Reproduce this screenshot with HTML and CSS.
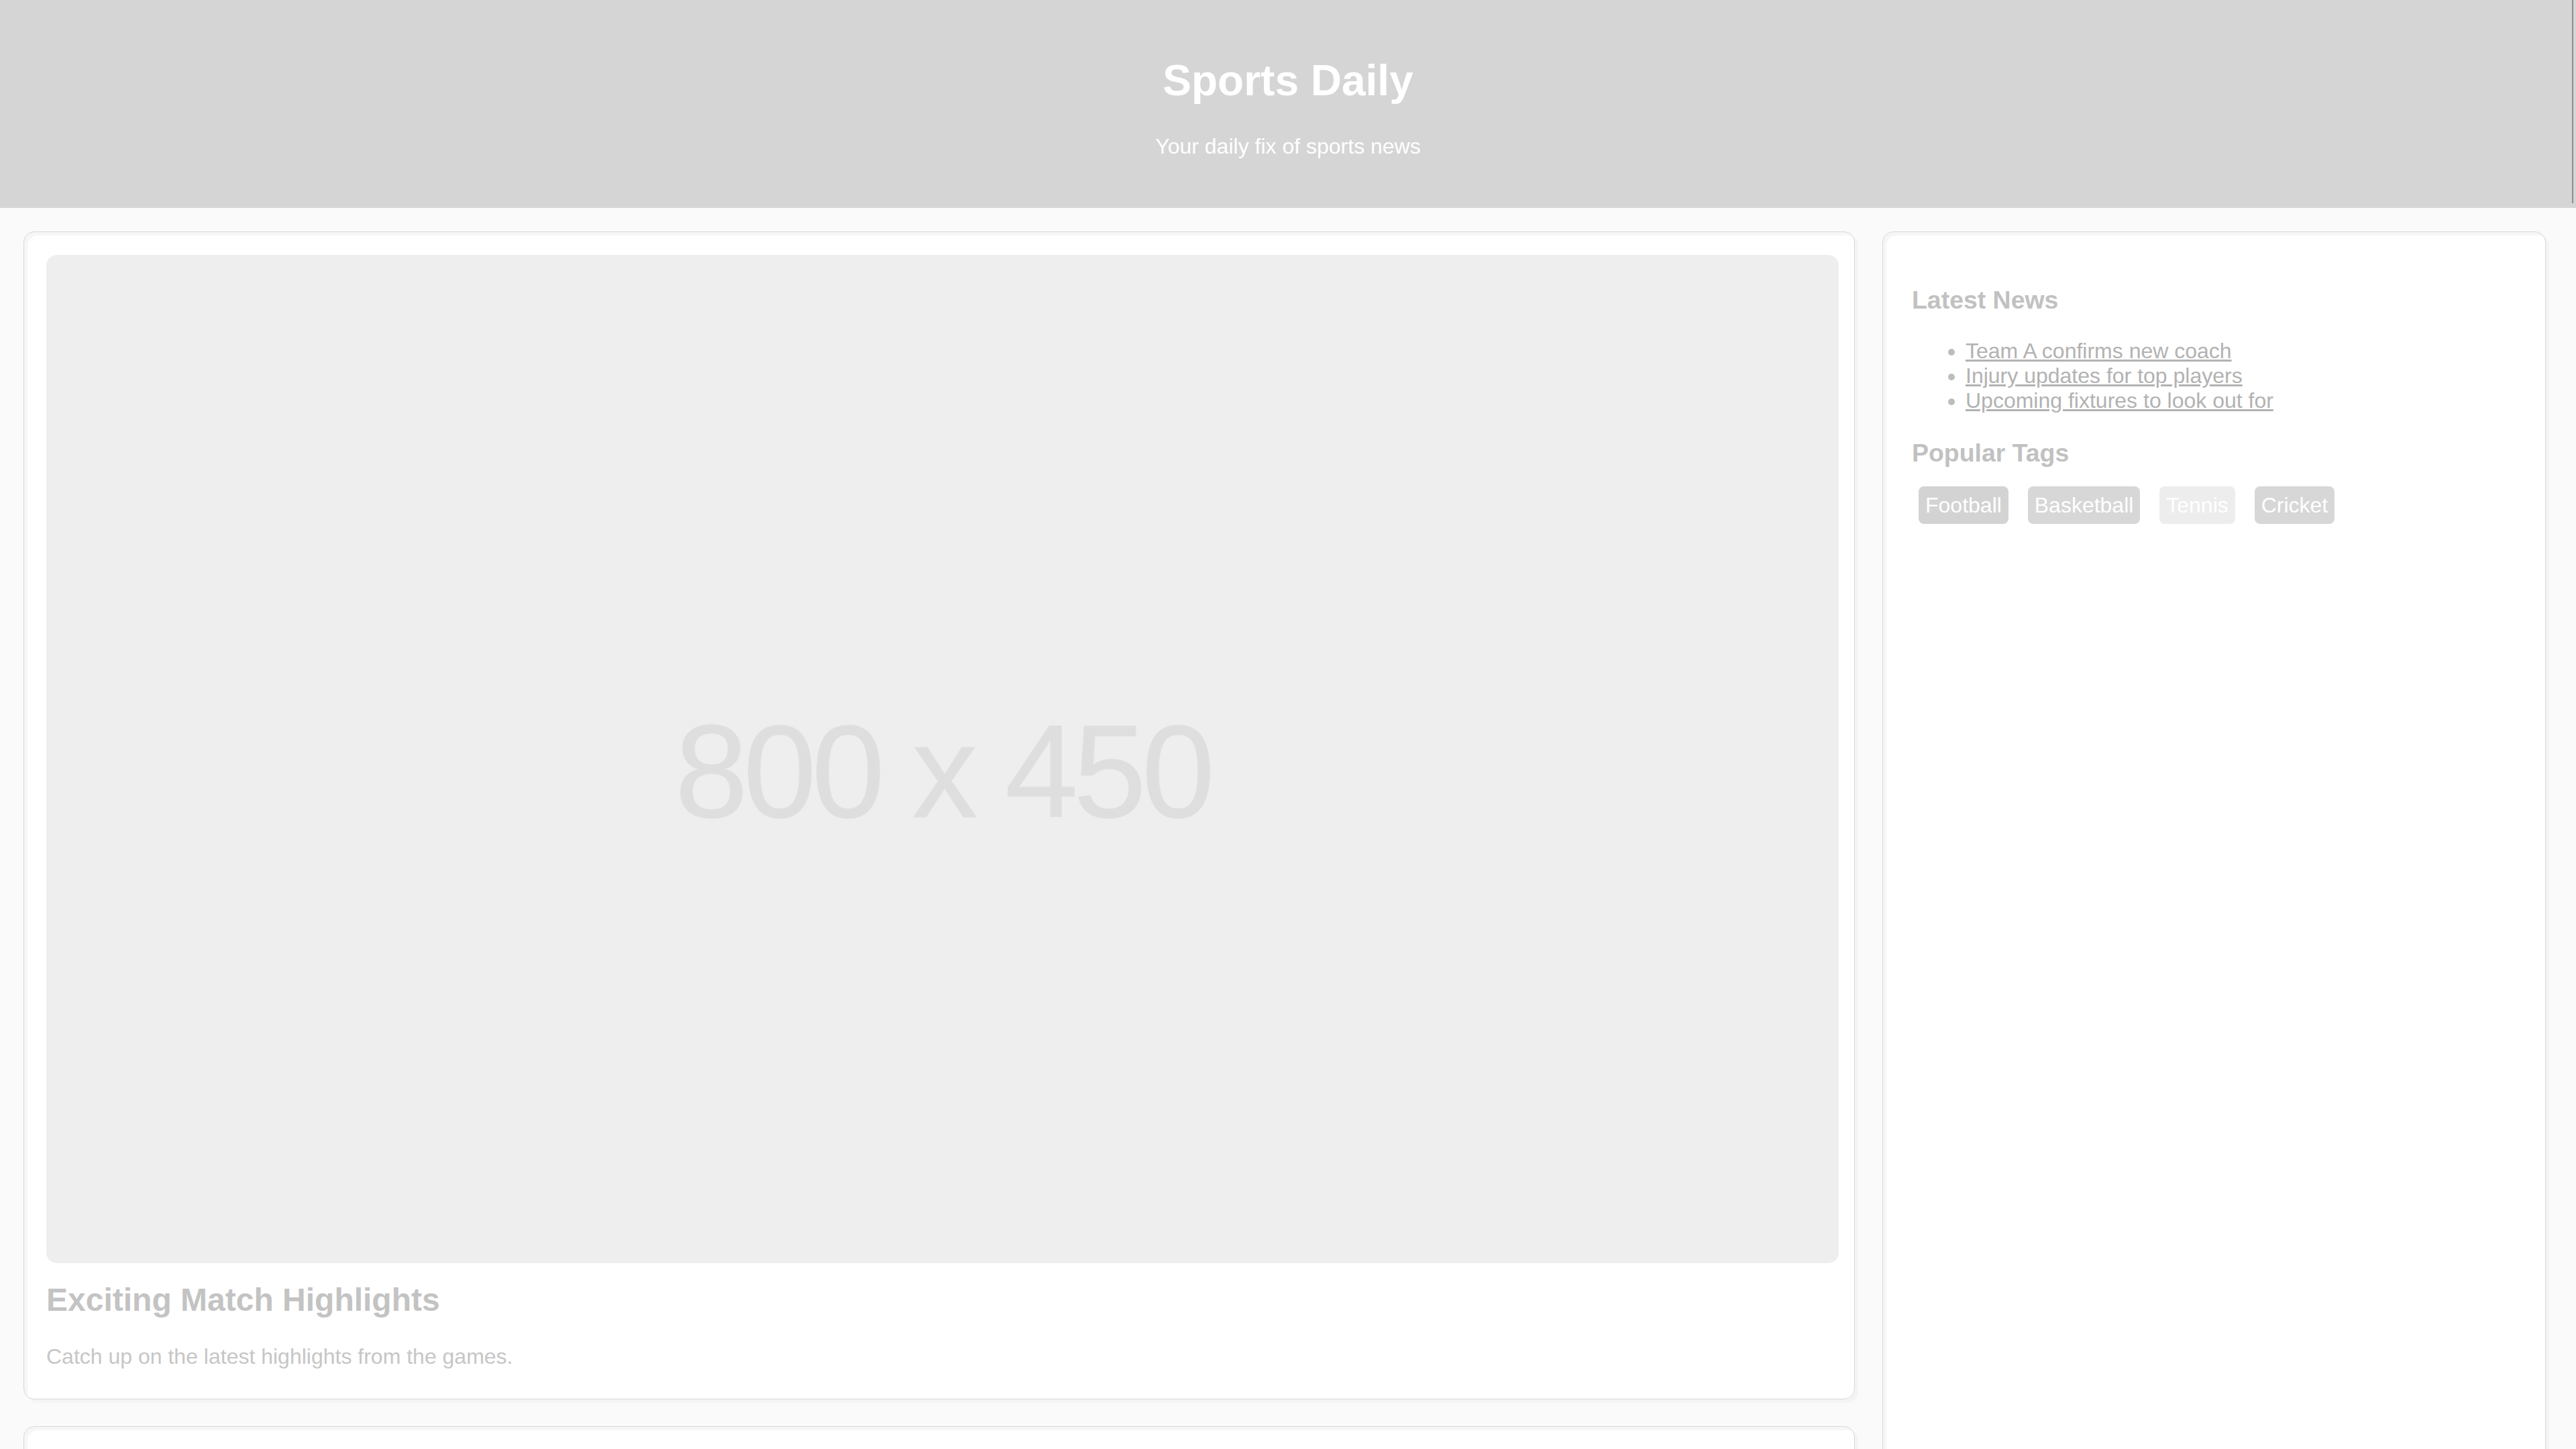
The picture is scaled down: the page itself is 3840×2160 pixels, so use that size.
FILE: index.html
```html
<!DOCTYPE html>
<html lang="en">
<head>
<meta charset="utf-8">
<title>Sports Daily</title>
<link rel="stylesheet" href="styles.css">
</head>
<body>
<header class="site-header">
  <h1 class="site-title">Sports Daily</h1>
  <p class="site-tagline">Your daily fix of sports news</p>
</header>
<div class="layout">
  <main class="articles">
    <article class="card">
      <div class="placeholder"><span>800 x 450</span></div>
      <h2 class="card-title">Exciting Match Highlights</h2>
      <p class="card-text">Catch up on the latest highlights from the games.</p>
    </article>
    <article class="card card--next">
      <div class="placeholder"></div>
    </article>
  </main>
  <aside class="sidebar">
    <h3 class="sidebar-title">Latest News</h3>
    <ul class="news-list">
      <li><a href="#">Team A confirms new coach</a></li>
      <li><a href="#">Injury updates for top players</a></li>
      <li><a href="#">Upcoming fixtures to look out for</a></li>
    </ul>
    <h3 class="sidebar-title sidebar-title--tags">Popular Tags</h3>
    <div class="tags">
      <span class="tag tag--football">Football</span>
      <span class="tag tag--basketball">Basketball</span>
      <span class="tag tag--tennis">Tennis</span>
      <span class="tag tag--cricket">Cricket</span>
    </div>
  </aside>
</div>
</body>
</html>
```

FILE: styles.css
```css
html, body {
  margin: 0;
  padding: 0;
}

body {
  background: #fafafa;
  font-family: "Liberation Sans", Arial, sans-serif;
  font-size: 32px;
  line-height: normal;
}

.site-header {
  position: relative;
  background: #d5d5d5;
  color: #ffffff;
  text-align: center;
  padding: 40px 0 41px;
}

.site-header::after {
  content: "";
  position: absolute;
  top: 0;
  right: 4px;
  width: 2px;
  height: 303px;
  background: #8e8e8e;
}

.site-title {
  font-size: 64px;
  font-weight: bold;
  margin: 43px 0;
}

.site-tagline {
  font-size: 32px;
  margin: 0 0 32px;
}

.layout {
  display: grid;
  grid-template-columns: minmax(0, 1fr) 989px;
  column-gap: 41px;
  align-items: stretch;
  padding: 35px 45px 40px 35px;
}

.card,
.sidebar {
  background: #ffffff;
  border: 1px solid #d8d8d8;
  border-radius: 16px;
  box-shadow: inset 5px 5px 0 #f6f6f6, 5px 5px 0 #f4f4f4;
}

.card {
  padding: 34px 23px 23px 33px;
}

.card + .card {
  margin-top: 40px;
}

.placeholder {
  box-sizing: border-box;
  aspect-ratio: 16 / 9;
  background: #eeeeee;
  border-radius: 16px;
  display: flex;
  align-items: center;
  justify-content: center;
  padding-top: 37px;
  color: #dedede;
  font-size: 196px;
  letter-spacing: -7px;
  -webkit-text-stroke: 1px #e0e0e0;
}

.card-title {
  font-size: 48px;
  font-weight: bold;
  line-height: 55px;
  color: #c3c3c3;
  margin: 27px 0 38.5px;
}

.card-text {
  color: #c6c6c6;
  line-height: 36.8px;
  margin: 0 0 22px;
}

.sidebar {
  padding: 80px 40px 40px 43px;
}

.sidebar-title {
  font-size: 37.44px;
  font-weight: bold;
  line-height: 43px;
  color: #c1c1c1;
  margin: 0 0 36px;
}

.sidebar-title--tags {
  margin-bottom: 38px;
}

.news-list {
  margin: 0 0 39px;
  padding-left: 80px;
  line-height: 36.8px;
  color: #bdbdbd;
}

.news-list a {
  color: #b2b2b2;
  text-decoration: underline;
}

.tags {
  line-height: 36.8px;
}

.tag {
  padding: 10px;
  margin: 0 10px;
  border-radius: 8px;
  color: #ffffff;
  background: #d3d3d3;
}

.tag--basketball {
  background: #d7d7d7;
}

.tag--tennis {
  background: #ededed;
}

.tag--cricket {
  background: #d7d7d7;
}
```
